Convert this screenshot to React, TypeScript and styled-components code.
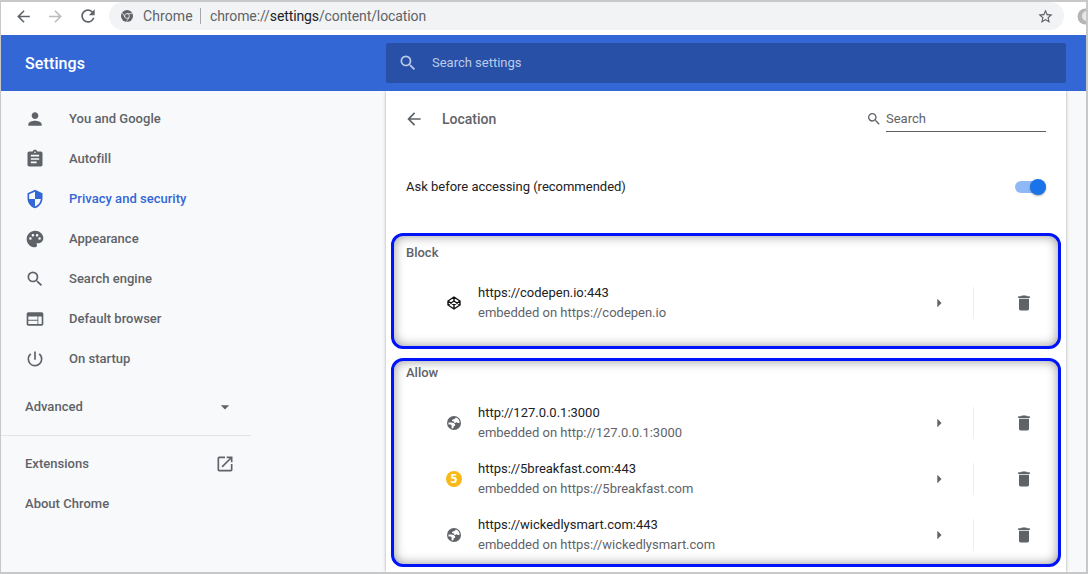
import React from 'react';
import styled, { createGlobalStyle } from 'styled-components';
import {
  MdPerson, MdAssignment, MdPalette, MdSearch, MdWeb, MdPowerSettingsNew, MdArrowDropDown,
  MdOpenInNew, MdArrowBack, MdArrowForward, MdRefresh, MdStarBorder, MdDelete, MdArrowRight,
} from 'react-icons/md';

const GlobalStyle = createGlobalStyle`
  * { box-sizing: border-box; }
  body { margin: 0; background: #fff; }
  svg { display: block; flex: none; }
`;

const Window = styled.div`
  width: 1088px;
  height: 574px;
  overflow: hidden;
  display: flex;
  flex-direction: column;
  border: 2px solid #c8c8c8;
  border-left-width: 1px;
  background: #f8f9fb;
  font: 13px/20px Roboto, sans-serif;
  letter-spacing: -0.01px;
  color: #5f6368;
`;

const Toolbar = styled.div`
  flex: none;
  height: 33px;
  display: flex;
  align-items: flex-start;
  background: #fff;
  overflow: hidden;
`;

const NavButtons = styled.div`
  flex: none;
  display: flex;
  align-items: center;
  gap: 13px;
  height: 28px;
  width: 108px;
  padding-left: 13px;
`;

const Omnibox = styled.div`
  flex: none;
  display: flex;
  align-items: center;
  width: 955px;
  height: 28px;
  padding: 0 10px 0 12px;
  border-radius: 14px;
  background: #f1f3f4;
  font-size: 14px;
`;

const Origin = styled.span`
  box-sizing: content-box;
  width: 49px;
  margin-left: 10px;
  padding-right: 8px;
  border-right: 1px solid #a5a8ac;
  line-height: 16px;
  letter-spacing: 0.1px;
`;

const Address = styled.span`
  flex: 1;
  margin-left: 9px;
  letter-spacing: -0.11px;
  b { font-weight: 400; color: #202124; }
`;

const Extension = styled.div`
  flex: none;
  margin: 6px 0 0 13px;
  width: 17px;
  height: 17px;
`;

const Header = styled.header`
  flex: none;
  height: 56px;
  display: flex;
  align-items: center;
  background: #3367d6;
  color: #fff;
`;

const Title = styled.h1`
  margin: 0;
  width: 385px;
  padding: 2px 0 0 24px;
  font-size: 16px;
  font-weight: 500;
  letter-spacing: 0.12px;
`;

const SearchBar = styled.div`
  display: flex;
  align-items: center;
  gap: 14px;
  width: 680px;
  height: 40px;
  padding-left: 12px;
  border-radius: 2px;
  background: #2850a7;
  color: #bccbea;
`;

const Body = styled.div`
  flex: 1;
  min-height: 0;
  display: flex;
`;

const Sidebar = styled.nav`
  width: 385px;
  padding-top: 8px;
  font-weight: 500;
  letter-spacing: 0.02px;
`;

const NavItem = styled.a<{ $active?: boolean }>`
  display: flex;
  align-items: center;
  gap: 24px;
  height: 40px;
  padding-left: 24px;
  color: ${p => (p.$active ? '#3367d6' : '#5f6368')};
`;

const WideItem = styled.a`
  display: flex;
  align-items: center;
  justify-content: space-between;
  width: 250px;
  height: 40px;
  padding: 0 16px 0 24px;
`;

const AdvancedGroup = styled.div`
  width: 250px;
  padding: 8px 0;
  margin-bottom: 8px;
  border-bottom: 1px solid #e2e4e6;
`;

const Panel = styled.main`
  width: 680px;
  padding: 0 5px;
  background: #fff;
  box-shadow: 0 0 3px rgba(60, 64, 67, 0.45);
  clip-path: inset(0 -4px 0 -4px);
`;

const PanelHeader = styled.div`
  display: flex;
  align-items: center;
  height: 56px;
  padding: 0 15px 0 13px;
`;

const PanelTitle = styled.h2`
  flex: 1;
  margin: 0 0 0 18px;
  font-size: 14px;
  font-weight: 500;
  letter-spacing: 0;
`;

const PanelSearch = styled.div`
  display: flex;
  align-items: center;
  gap: 4px;
`;

const PanelInput = styled.div`
  width: 160px;
  height: 25px;
  padding-top: 2px;
  border-bottom: 1px solid #5f6368;
`;

const Setting = styled.div`
  display: flex;
  align-items: center;
  justify-content: space-between;
  height: 80px;
  margin-bottom: 6px;
  padding: 0 15px;
  color: #202124;
`;

const Track = styled.span`
  display: flex;
  align-items: center;
  justify-content: flex-end;
  width: 31px;
  height: 12px;
  border-radius: 6px;
  background: #8fb8f6;
`;

const Knob = styled.span`
  flex: none;
  width: 16px;
  height: 16px;
  border-radius: 50%;
  background: #1a73e8;
  box-shadow: 0 1px 2px rgba(0, 0, 0, 0.35);
`;

const Group = styled.section<{ $height: number; $labelTop: number }>`
  height: ${p => p.$height}px;
  margin-bottom: 9px;
  padding: ${p => p.$labelTop}px 12px 0;
  border: 3px solid #0014fa;
  border-radius: 12px;
  box-shadow: inset 0 0 11px rgba(0, 0, 0, 0.42);
`;

const GroupTitle = styled.h3`
  margin: 0 0 12px;
  font-size: 13px;
  line-height: 20px;
  font-weight: 500;
`;

const SiteRow = styled.div`
  display: flex;
  align-items: center;
  height: 56px;
  padding: 0 12px 0 40px;
`;

const SiteIcon = styled.span`
  display: flex;
  justify-content: center;
  width: 16px;
  margin-right: 16px;
`;

const SiteText = styled.div`
  flex: 1;
  color: #5f6368;
`;

const SiteName = styled.div`
  color: #202124;
`;

const Divider = styled.span`
  width: 1px;
  height: 32px;
  margin: 0 40px 0 24px;
  background: #eceef0;
`;

const FiveBadge = styled.span`
  width: 16px;
  height: 16px;
  border-radius: 50%;
  background: #fbb917;
  color: #fff;
  font: 700 12px/16px "Open Sans", sans-serif;
  letter-spacing: 0;
  text-align: center;
`;

const ShieldIcon = () => (
  <svg width="20" height="20" viewBox="0 0 24 24" fill="currentColor">
    <path d="M12 1 3 5v6c0 5.55 3.84 10.74 9 12 5.16-1.26 9-6.45 9-12V5l-9-4zm0 10.99h7c-.53 4.12-3.28 7.79-7 8.94V12H5V6.300l7-3.110v8.800z" />
  </svg>
);

const ChromeIcon = () => (
  <svg width="12" height="12" viewBox="0 0 24 24">
    <circle cx="12" cy="12" r="12" fill="#5f6368" />
    <circle cx="12" cy="12" r="4.800" fill="none" stroke="#f1f3f4" strokeWidth="1.600" />
    <path d="M12 7.200H22.500M7.800 14.400 2.600 5.400M16.200 14.400 11 23.500" stroke="#f1f3f4" strokeWidth="1.400" />
  </svg>
);

const GlobeIcon = () => (
  <svg width="14" height="14" viewBox="0 0 14 14">
    <circle cx="7" cy="7" r="7" fill="#5f6368" />
    <path d="M8.800 1.500C8.600 2.500 7.800 2.500 7.400 3C6.800 3.400 5 3.300 5 4.500C5 5.500 6.400 5.100 6.700 5.600C7.100 6.100 6.900 7 8 7C9 7 9.300 6.200 10 6.400C10.600 6.600 11.300 7.200 12.600 7A5.700 5.700 0 0 0 8.800 1.500Z" fill="#fff" />
    <path d="M1.400 6.600H4.200C6.500 6.600 8.200 7.500 8.200 9.100C8.200 10.200 7 10.400 6.500 10.500V12C6.500 12.500 5.600 12.500 5 12.300A5.700 5.700 0 0 1 4.300 12C5 11.300 4.600 10.600 4.600 9.900C4.600 9 3.900 8.500 3.100 8.500H1.600Z" fill="#fff" />
  </svg>
);

const CodepenIcon = () => (
  <svg width="14" height="14" viewBox="0 0 14 14" fill="none" stroke="#111" strokeWidth="1.400" strokeLinejoin="round">
    <path d="M7 1 13 5v4L7 13 1 9V5ZM7 1V5M7 9v4M1 5l6 4 6-4M1 9l6-4 6 4" />
  </svg>
);

const navItems = [
  { label: 'You and Google', icon: <MdPerson size={20} /> },
  { label: 'Autofill', icon: <MdAssignment size={20} /> },
  { label: 'Privacy and security', icon: <ShieldIcon />, active: true },
  { label: 'Appearance', icon: <MdPalette size={20} /> },
  { label: 'Search engine', icon: <MdSearch size={20} /> },
  { label: 'Default browser', icon: <MdWeb size={20} /> },
  { label: 'On startup', icon: <MdPowerSettingsNew size={20} /> },
];

const Site = ({ name, embedder, icon }: { name: string; embedder: string; icon: React.ReactNode }) => (
  <SiteRow>
    <SiteIcon>{icon}</SiteIcon>
    <SiteText>
      <SiteName>{name}</SiteName>
      <div>embedded on {embedder}</div>
    </SiteText>
    <MdArrowRight size={20} />
    <Divider />
    <MdDelete size={20} />
  </SiteRow>
);

export default function App() {
  return (
    <Window>
      <GlobalStyle />
      <Toolbar>
        <NavButtons>
          <MdArrowBack size={19} />
          <MdArrowForward size={19} color="#babcbe" />
          <MdRefresh size={20} />
        </NavButtons>
        <Omnibox>
          <ChromeIcon />
          <Origin>Chrome</Origin>
          <Address>chrome://<b>settings</b>/content/location</Address>
          <MdStarBorder size={17} />
        </Omnibox>
        <Extension>
          <svg width="17" height="17" viewBox="0 0 17 17">
            <circle cx="8.500" cy="8.500" r="8" fill="#b5b5b5" />
            <circle cx="10" cy="8" r="5" fill="#e8e8e8" />
          </svg>
        </Extension>
      </Toolbar>
      <Header>
        <Title>Settings</Title>
        <SearchBar>
          <MdSearch size={20} />
          Search settings
        </SearchBar>
      </Header>
      <Body>
        <Sidebar>
          {navItems.map(item => (
            <NavItem key={item.label} $active={item.active}>
              {item.icon}
              {item.label}
            </NavItem>
          ))}
          <AdvancedGroup>
            <WideItem>Advanced<MdArrowDropDown size={20} /></WideItem>
          </AdvancedGroup>
          <WideItem>Extensions<MdOpenInNew size={20} /></WideItem>
          <WideItem>About Chrome</WideItem>
        </Sidebar>
        <Panel>
          <PanelHeader>
            <MdArrowBack size={20} />
            <PanelTitle>Location</PanelTitle>
            <PanelSearch>
              <MdSearch size={16} />
              <PanelInput>Search</PanelInput>
            </PanelSearch>
          </PanelHeader>
          <Setting>
            Ask before accessing (recommended)
            <Track><Knob /></Track>
          </Setting>
          <Group $height={116} $labelTop={7}>
            <GroupTitle>Block</GroupTitle>
            <Site name="https://codepen.io:443" embedder="https://codepen.io" icon={<CodepenIcon />} />
          </Group>
          <Group $height={209} $labelTop={2}>
            <GroupTitle>Allow</GroupTitle>
            <Site name="http://127.0.0.1:3000" embedder="http://127.0.0.1:3000" icon={<GlobeIcon />} />
            <Site name="https://5breakfast.com:443" embedder="https://5breakfast.com" icon={<FiveBadge>5</FiveBadge>} />
            <Site name="https://wickedlysmart.com:443" embedder="https://wickedlysmart.com" icon={<GlobeIcon />} />
          </Group>
        </Panel>
      </Body>
    </Window>
  );
}
